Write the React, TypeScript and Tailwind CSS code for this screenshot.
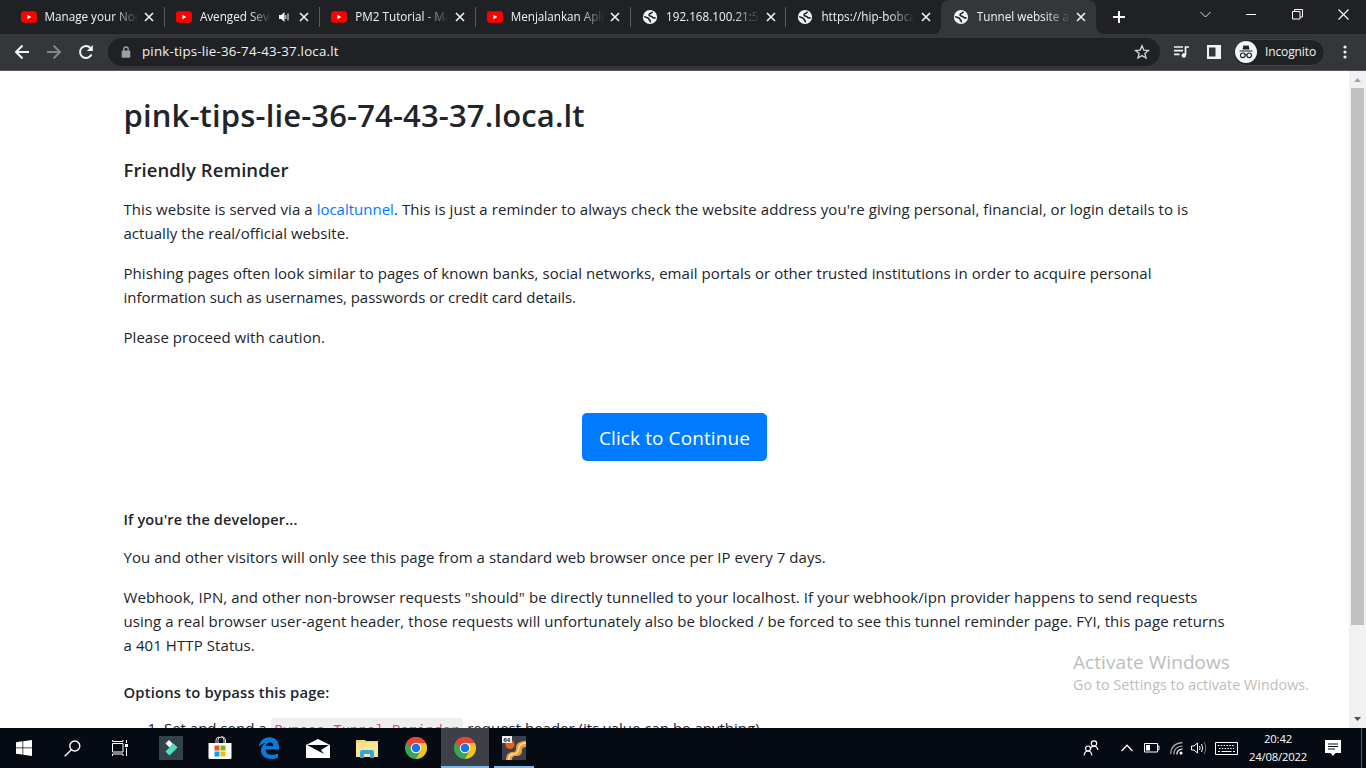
import type { ReactNode } from "react";

function Line({ children, className = "" }: { children: ReactNode; className?: string }) {
  return <span className={`inline-block whitespace-pre ${className}`}>{children}</span>;
}

function YouTube() {
  return (
    <svg viewBox="0 0 16 16" className="size-4 shrink-0">
      <rect x="0" y="2.2" width="16" height="11.6" rx="3" fill="#f00" />
      <path d="M6.4 5.7v4.6L10.3 8z" fill="#fff" />
    </svg>
  );
}

function Globe() {
  return (
    <svg viewBox="0 0 16 16" className="size-4 shrink-0">
      <circle cx="8" cy="8" r="7.1" fill="#f1f3f4" />
      <g fill="none" stroke="#202124" strokeWidth="1.600">
        <path d="M10.300 2.600C10.500 4.600 7 4 7 5.900 7 7.600 10 7 10.600 8.300 11 9.200 12.500 8.900 13.600 8.800" />
        <path d="M2.200 7.400C3 8.800 6.600 8.300 6.900 10 7.100 11.300 8.600 11.300 8.400 13.400" />
      </g>
    </svg>
  );
}

function Cross({ className = "" }: { className?: string }) {
  return (
    <svg viewBox="0 0 10 10" className={`size-2.5 shrink-0 ${className}`} stroke="#f1f3f4" strokeWidth="1.6">
      <path d="M1 1l8 8M9 1l-8 8" />
    </svg>
  );
}

const tabs = [
  { icon: "yt", title: "Manage your Nod" },
  { icon: "yt", title: "Avenged Seve", sound: true },
  { icon: "yt", title: "PM2 Tutorial - Ma" },
  { icon: "yt", title: "Menjalankan Aplik" },
  { icon: "gl", title: "192.168.100.21:50" },
  { icon: "gl", title: "https://hip-bobcat" },
  { icon: "gl", title: "Tunnel website ah", active: true },
];

function TabStrip() {
  return (
    <div className="flex h-[34px] shrink-0 bg-[#202124] pl-[8.5px]">
      {tabs.map((t, i) => (
        <div
          key={t.title}
          className={`relative flex w-[155.4px] shrink-0 items-center pl-[12px] ${t.active ? "rounded-t-lg bg-[#35363a]" : ""}`}
        >
          {t.active && (
            <>
              <svg viewBox="0 0 8 8" className="absolute -left-2 bottom-0 size-2" fill="#35363a"><path d="M8 0v8H0a8 8 0 0 0 8-8z" /></svg>
              <svg viewBox="0 0 8 8" className="absolute -right-2 bottom-0 size-2" fill="#35363a"><path d="M0 0v8h8a8 8 0 0 1-8-8z" /></svg>
            </>
          )}
          {t.icon === "yt" ? <YouTube /> : <Globe />}
          <span
            className={`ml-2 overflow-hidden whitespace-nowrap text-[11.7px] text-[#f1f3f4] ${t.sound ? "w-[70px] [mask-image:linear-gradient(to_right,black_50px,transparent_72px)]" : "w-[92px] [mask-image:linear-gradient(to_right,black_68px,transparent_94px)]"}`}
          >
            {t.title}
          </span>
          {t.sound && (
            <svg viewBox="0 0 12 12" className="ml-2 size-3 shrink-0" fill="#f1f3f4">
              <path d="M1 4v4h2.200L6.500 11V1L3.200 4z" />
              <path d="M7.800 4v4M10 2.500v7" stroke="#f1f3f4" fill="none" />
            </svg>
          )}
          <Cross className={t.sound ? "ml-[9.500px]" : "ml-[7.500px]"} />
          {i < 5 && <i className="absolute -right-px top-[7px] h-5 w-px bg-[#5a5b5f]" />}
        </div>
      ))}
      <svg viewBox="0 0 12 12" className="ml-[16.5px] mt-[11px] size-3" stroke="#fff" strokeWidth="2"><path d="M6 0v12M0 6h12" /></svg>
      <div className="ml-auto mt-[9px] flex h-[11px] gap-[35px] pr-[17px]">
        <svg viewBox="0 0 11 11" className="size-[11px]" fill="none" stroke="#dcdddf"><path d="M.5 3l5 5 5-5" /></svg>
        <svg viewBox="0 0 11 11" className="size-[11px]" stroke="#fff"><path d="M0 5.500h10" /></svg>
        <svg viewBox="0 0 11 11" className="size-[11px]" fill="none" stroke="#fff"><path d="M.5 2.500h7.500v7.500H.5zM2.500 2.500v-2H10.500v7.500H8" /></svg>
        <svg viewBox="0 0 11 11" className="size-[11px]" stroke="#fff" strokeWidth="1.100"><path d="M.5.5l10 10M10.500.5l-10 10" /></svg>
      </div>
    </div>
  );
}

function Toolbar() {
  return (
    <div className="flex h-[37px] shrink-0 items-center border-b border-[#5b565e] bg-[#35363a] pl-[14px] text-[#f1f3f4]">
      <svg viewBox="0 0 16 16" className="size-4" fill="none" stroke="#f1f3f4" strokeWidth="2"><path d="M15 8H2.500M8.500 1.500L2 8l6.500 6.500" /></svg>
      <svg viewBox="0 0 16 16" className="ml-4 size-4" fill="none" stroke="#85868a" strokeWidth="2"><path d="M1 8h12.500M7.500 1.500L14 8l-6.500 6.500" /></svg>
      <svg viewBox="0 0 16 16" className="ml-4 size-4" fill="none" stroke="#f1f3f4" strokeWidth="2"><path d="M13.500 10.500A6 6 0 1 1 12.500 4" /><path d="M14.800 1v6H8.800z" fill="#f1f3f4" stroke="none" /></svg>
      <div className="ml-[14px] flex h-7 w-[1052px] items-center rounded-full bg-[#202124] pl-[13px] pr-[10px]">
        <svg viewBox="0 0 10 12" className="h-3 w-2.5" fill="#9aa0a6"><path d="M1.500 4.500h7a.8.8 0 0 1 .8.800v5.700a.8.8 0 0 1-.8.800h-7a.8.8 0 0 1-.8-.8V5.300a.8.8 0 0 1 .8-.8z" /><path d="M2.800 5V3.200a2.200 2.200 0 0 1 4.400 0V5" fill="none" stroke="#9aa0a6" strokeWidth="1.300" /></svg>
        <span className="ml-[11px] text-[13.300px]"><Line className="tracking-[0.2px]">pink-tips-lie-36-74-43-37.loca.lt</Line></span>
        <svg viewBox="0 0 16 16" className="ml-auto size-4" fill="none" stroke="#d5d7da" strokeWidth="1.300"><path d="M8 1.800l1.800 4.300 4.600.4-3.500 3 1.100 4.500L8 11.600 4 14l1.100-4.500-3.500-3 4.600-.4z" /></svg>
      </div>
      <svg viewBox="0 0 17 14" className="ml-[13px] h-[14px] w-[17px]" fill="none" stroke="#f1f3f4" strokeWidth="1.700"><path d="M1 2h9M1 5.700h9M1 9.400h5.500M12.500 10V2H16" /><circle cx="10.800" cy="10.500" r="2.200" fill="#f1f3f4" stroke="none" /></svg>
      <svg viewBox="0 0 14 14" className="ml-[17px] size-[14px]"><path d="M0 0h14v14H0zM2 2.500v9h6.500v-9z" fill="#f1f3f4" fillRule="evenodd" /></svg>
      <div className="ml-[12px] flex h-[27px] w-[92px] items-center rounded-full border border-[#404145] bg-[#202124] pl-[1px]">
        <svg viewBox="0 0 22 22" className="size-[22px]">
          <circle cx="11" cy="11" r="11" fill="#f1f3f4" />
          <path d="M7.500 8.500l1-4.200 1.500.500 1-.3 1 .3 1.500-.5 1 4.200zM4.500 9.500h13v1h-13z" fill="#202124" />
          <g fill="none" stroke="#202124" strokeWidth="1.100"><circle cx="7.800" cy="14.300" r="2.300" /><circle cx="14.200" cy="14.300" r="2.300" /><path d="M10 14q1-.7 2 0" /></g>
        </svg>
        <span className="ml-[8px] text-[12px] tracking-[-0.12px]"><Line>Incognito</Line></span>
      </div>
      <svg viewBox="0 0 4 14" className="ml-[18px] h-[14px] w-1" fill="#f1f3f4"><circle cx="2" cy="2" r="1.600" /><circle cx="2" cy="7" r="1.600" /><circle cx="2" cy="12" r="1.600" /></svg>
    </div>
  );
}

function Page() {
  return (
    <main className="h-full flex-1 overflow-hidden bg-white pl-[123.5px] text-[15px] leading-6 text-[#212529]">
      <h2 className="mt-[25px] h-[39px] text-[31px] font-semibold leading-[39px]"><Line className="tracking-[0.150px]">pink-tips-lie-36-74-43-37.loca.lt</Line></h2>
      <h5 className="mt-[23px] h-6 text-[18.500px] font-semibold"><Line className="tracking-[0.060px]">Friendly Reminder</Line></h5>
      <p className="mt-[15px]">
        <Line className="tracking-[0.060px]">{"This website is served via a "}</Line>
        <Line className="text-[#007bff]">localtunnel</Line>
        <Line className="tracking-[0.071px]">. This is just a reminder to always check the website address you're giving personal, financial, or login details to is</Line>
        <br />
        <Line className="tracking-[0.040px]">actually the real/official website.</Line>
      </p>
      <p className="mt-4">
        <Line className="tracking-[0.058px]">Phishing pages often look similar to pages of known banks, social networks, email portals or other trusted institutions in order to acquire personal</Line>
        <br />
        <Line className="tracking-[-0.036px]">information such as usernames, passwords or credit card details.</Line>
      </p>
      <p className="mt-4"><Line className="tracking-[0.040px]">Please proceed with caution.</Line></p>
      <button className="ml-[458.5px] mt-[64px] flex h-12 w-[185px] items-center justify-center rounded-[5px] bg-[#007bff] pt-px text-[19px] text-white"><Line className="tracking-[0.1px]">Click to Continue</Line></button>
      <h6 className="mt-[47px] text-[14.500px] font-semibold"><Line className="tracking-[0.150px]">If you're the developer...</Line></h6>
      <p className="mt-[13px]"><Line className="tracking-[0.052px]">You and other visitors will only see this page from a standard web browser once per IP every 7 days.</Line></p>
      <p className="mt-4">
        <Line className="tracking-[0.075px]">Webhook, IPN, and other non-browser requests "should" be directly tunnelled to your localhost. If your webhook/ipn provider happens to send requests</Line>
        <br />
        <Line className="tracking-[0.062px]">using a real browser user-agent header, those requests will unfortunately also be blocked / be forced to see this tunnel reminder page. FYI, this page returns</Line>
        <br />
        <Line className="tracking-[0.080px]">a 401 HTTP Status.</Line>
      </p>
      <h6 className="mt-[23px] text-[14.800px] font-semibold"><Line className="tracking-[0.170px]">Options to bypass this page:</Line></h6>
      <p className="mt-[12px] pl-6">
        <Line>{"1. "}</Line>
        <Line>{"Set and send a "}</Line>
        <code className="mt-[2px] inline-block h-6 rounded-[3px] bg-[#eee] px-1 pt-px align-top font-['Liberation_Mono'] text-[14px] leading-6 text-[#e83e8c]">Bypass-Tunnel-Reminder</code>
        <Line>{" request header (its value can be anything)."}</Line>
      </p>
    </main>
  );
}

function Scrollbar() {
  return (
    <div className="flex h-full w-[17px] shrink-0 flex-col items-center bg-[#f1f1f1]">
      <svg viewBox="0 0 17 17" className="size-[17px] shrink-0" fill="#a3a3a3"><path d="M5 11h7L8.500 7z" /></svg>
      <div className="h-[537px] w-[13px] shrink-0 bg-[#c1c1c1]" />
      <svg viewBox="0 0 17 17" className="mt-auto size-[17px] shrink-0" fill="#505050"><path d="M5 6h7L8.500 10z" /></svg>
    </div>
  );
}

function Chrome() {
  return (
    <svg viewBox="0 0 24 24" className="size-[22px]">
      <circle cx="12" cy="12" r="12" fill="#34a853" />
      <path d="M12 6.500h10.700A12 12 0 0 1 12 24l5-9z" fill="#fbc116" />
      <path d="M1.600 6A12 12 0 0 1 22.700 6.500H12L7 13.500z" fill="#ea4335" />
      <circle cx="12" cy="12" r="5.800" fill="#fff" />
      <circle cx="12" cy="12" r="4.700" fill="#1a73e8" />
    </svg>
  );
}

function Taskbar() {
  return (
    <div className="flex h-10 shrink-0 items-center bg-[#060a12] text-white">
      <div className="flex w-12 justify-center"><svg viewBox="0 0 16 16" className="size-4" fill="#fff"><path d="M0 2.200l6.500-.9v6.200H0zM7.200 1.200L16 0v7.500H7.200zM0 8.300h6.500v6.300L0 13.700zM7.200 8.300H16V16l-8.800-1.200z" /></svg></div>
      <div className="flex w-12 justify-center"><svg viewBox="0 0 17 17" className="size-[17px]" fill="none" stroke="#fff" strokeWidth="1.400"><circle cx="10.800" cy="6" r="5" /><path d="M7.300 9.700L.7 16.300" /></svg></div>
      <div className="flex w-12 justify-center"><svg viewBox="0 0 17 16" className="h-4 w-[17px]" fill="none" stroke="#fff"><path d="M.5 3.500h10.500v8.500H.5zM.5 0v1.500H11V0M.5 16v-2H11v2M14.500 0v3M14.500 8v8" /><path d="M13 4h3v3h-3z" fill="#fff" stroke="none" /></svg></div>
      <div className="flex w-[54px] justify-center"><svg viewBox="0 0 24 24" className="size-6"><path d="M0 0h24v24H0z" fill="#34424c" /><path d="M10 4l4 4-3.500 3.500L6.500 7.500z" fill="#fff" /><path d="M14.500 7.500l4 4-8 8-4-4z" fill="#4fe0bf" /></svg></div>
      <div className="flex w-[43px] justify-center"><svg viewBox="0 0 24 24" className="size-6"><path d="M.5 7h23v14.500q0 1.500-1.500 1.500H2q-1.500 0-1.500-1.500z" fill="#fff" /><path d="M8 7V4q0-2.500 3-3M10 7V4a3 3 0 0 1 6 0v3M17.500 7V4q0-3-4-3.500" fill="none" stroke="#ddd" /><path d="M6.500 9.500h5v5h-5z" fill="#f25022" /><path d="M12.500 9.500h5v5h-5z" fill="#7fba00" /><path d="M6.500 15.500h5v5h-5z" fill="#00a4ef" /><path d="M12.500 15.500h5v5h-5z" fill="#ffb900" /></svg></div>
      <div className="flex w-14 justify-center"><svg viewBox="0 0 22 22" className="size-[22px]" fill="#0a7bd8"><path d="M1 9.800C1.700 4 6 .3 11.500.3 17 .3 21 4.500 21 10v2.500H7.500c.2 4 3.300 5.300 6.500 5.300 2.200 0 4.200-.6 6-1.600v4.200c-2 1-4.500 1.500-7 1.500C7 21.900 3 18.500 3 13.600c0-3.100 1.800-5.900 4.500-7.400C4.500 6.200 2.300 8 1 9.800zM7.700 9h7.600c0-2.200-1.100-3.600-3.500-3.600C9.500 5.400 8.100 6.800 7.700 9z" /></svg></div>
      <div className="flex w-[42px] justify-center"><svg viewBox="0 0 24 19" className="h-[19px] w-6"><path d="M0 6L12 0l12 6v13H0z" fill="#fff" /><path d="M1 6h22l-8 5 3 4-17-9z" fill="#060a12" /></svg></div>
      <div className="flex w-14 justify-center"><svg viewBox="0 0 22 19" className="h-[19px] w-[22px]"><path d="M0 1h9l1 1h12v16H0z" fill="#f8d775" /><path d="M0 4h22v14H0z" fill="#ffe694" /><path d="M4 19v-6q0-2 2-2h10q2 0 2 2v6h-4v-4H8v4z" fill="#35a7e0" /></svg></div>
      <div className="flex w-[46px] pl-[9.500px]"><Chrome /></div>
      <div className="flex h-10 w-12 flex-col items-center border-b-2 border-[#76b9ed] bg-[#3d4147] pt-[9px]"><Chrome /></div>
      <div className="ml-[5px] flex h-10 w-10 flex-col items-center border-b-2 border-[#76b9ed] pt-2">
        <svg viewBox="0 0 24 24" className="size-6"><path d="M0 0h24v24H0z" fill="#3a3f4a" /><circle cx="8" cy="8.500" r="4.500" fill="#e8601c" /><path d="M4 24c0-6 3-8 7-8 2 0 3-1 3-4 0-5 4-7 10-7v6c-3 0-4 1-4 4 0 4-3 5-6 5-3 0-4 1-4 4z" fill="#f59a38" /><path d="M24 7c-6 0-7 3-7.500 6.500-.5 3.500-2.500 4.500-5 4.500-3 0-4.500 2-5 6" stroke="#ffe3a8" fill="none" strokeWidth="1.500" /><path d="M0 0h10v7H0z" fill="#eee" /><text x="1.500" y="6" fontSize="6" fontWeight="700" fontFamily="Liberation Sans" fill="#111">64</text></svg>
      </div>
      <svg viewBox="0 0 16 16" className="ml-auto size-4" fill="none" stroke="#fff" strokeWidth="1.200"><circle cx="11" cy="3.500" r="2.700" /><path d="M7.500 9q.5-2.800 3.500-2.800T14.800 10" /><circle cx="5" cy="8.500" r="2.500" /><path d="M1.200 15.500q.3-4.500 3.800-4.500t3.800 4.500" /></svg>
      <svg viewBox="0 0 12 8" className="ml-[22px] h-2 w-3" fill="none" stroke="#fff" strokeWidth="1.300"><path d="M.5 7L6 1.300 11.500 7" /></svg>
      <svg viewBox="0 0 16 10" className="ml-[11px] h-2.5 w-4" fill="none" stroke="#fff"><path d="M.5.5h13v8.500H.5zM13.500 3h1.500v3.500h-1.500" /><path d="M2 2h4v5.500H2z" fill="#fff" stroke="none" /></svg>
      <svg viewBox="0 0 13 13" className="ml-[10px] size-[13px]" fill="none" stroke="#aaa" strokeWidth="1.200"><path d="M.7 12Q1 1.500 12.500.7M3.800 12.500Q4 4.500 12.500 4" /><path d="M6.800 12.500Q7 7.500 12.500 7" stroke="#fff" /><circle cx="11" cy="11" r="1.500" fill="#fff" stroke="none" /></svg>
      <svg viewBox="0 0 16 14" className="ml-2 h-[14px] w-4" fill="none" stroke="#fff"><path d="M.5 5v4h2.500l3.500 3V2L3 5zM8.500 5q1.300 2 0 4M10.500 3q2.500 4 0 8" /><path d="M13 1q3.500 6 0 12" stroke="#777" /></svg>
      <svg viewBox="0 0 23 13" className="ml-2 h-[13px] w-[23px]" fill="none" stroke="#fff"><path d="M.5.500h22v12H.5z" /><path d="M3 3.500h17M4 6.500h15" strokeDasharray="1.500 1.300" /><path d="M3 9.500h2M6.500 9.500h10M18 9.500h2" /></svg>
      <div className="ml-[10px] flex w-[60px] flex-col items-center text-[11.300px] leading-[18px] tracking-[-0.2px]"><Line>20:42</Line><Line>24/08/2022</Line></div>
      <svg viewBox="0 0 16 16" className="ml-[17px] size-4"><path d="M0 0h16v13h-5.500L8 16l-2.500-3H0z" fill="#fff" /><path d="M3 4h10M3 6.500h10M3 9h7" stroke="#060a12" /></svg>
      <i className="ml-[20px] mr-[4px] h-10 w-px bg-[#5a5d62]" />
    </div>
  );
}

export default function App() {
  return (
    <div className="relative flex h-[768px] w-[1366px] flex-col overflow-hidden font-['Open_Sans',sans-serif]">
      <TabStrip />
      <Toolbar />
      <div className="flex min-h-0 flex-1">
        <Page />
        <Scrollbar />
      </div>
      <Taskbar />
      <div className="absolute left-[1073px] top-[650px] flex flex-col text-[#bdbdbd]">
        <span className="text-[19px] leading-6"><Line className="tracking-[0.066px]">Activate Windows</Line></span>
        <span className="text-[14.300px] leading-[21px]"><Line className="tracking-[0.05px]">Go to Settings to activate Windows.</Line></span>
      </div>
    </div>
  );
}
